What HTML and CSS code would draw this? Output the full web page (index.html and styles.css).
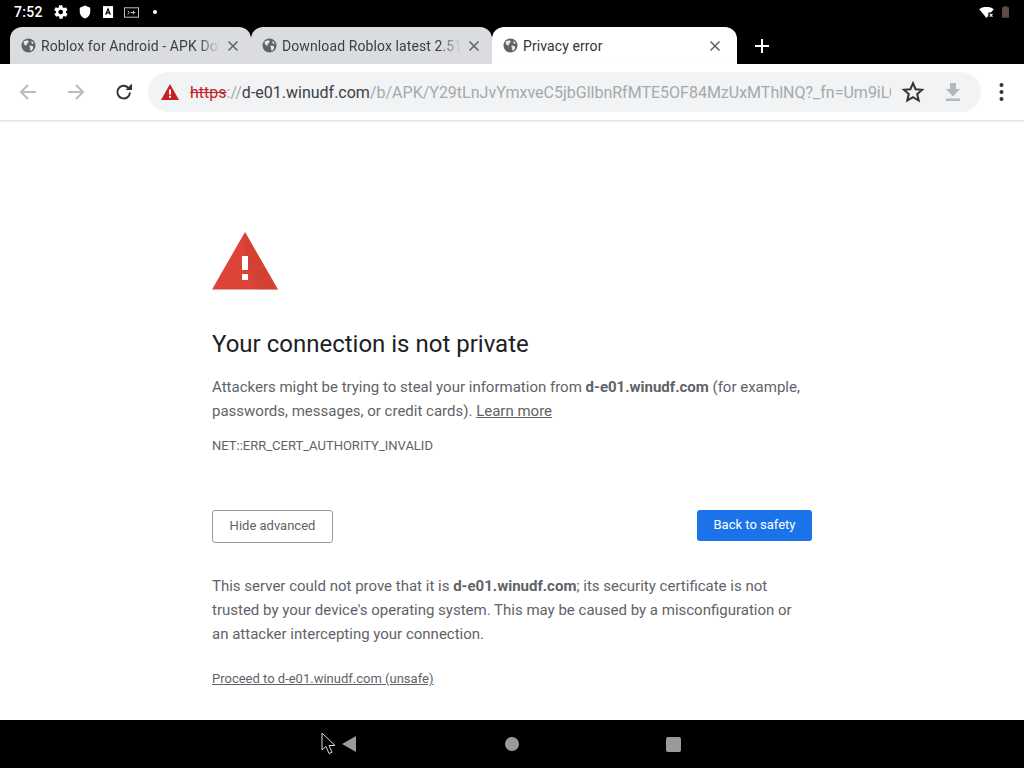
FILE: index.html
```html
<!DOCTYPE html>
<html lang="en">
<head>
<meta charset="utf-8">
<title>Privacy error</title>
<link rel="stylesheet" href="styles.css">
</head>
<body>
<div class="screen">
  <header class="status">
    <span class="time">7:52</span>
    <svg class="si gear" viewBox="0 0 24 24"><path fill="#fff" d="M19.4 13c.04-.32.1-.66.1-1s-.06-.68-.1-1l2.1-1.6c.2-.15.25-.42.12-.64l-2-3.46c-.12-.22-.39-.3-.61-.22l-2.49 1c-.52-.4-1.08-.73-1.69-.98L14 2.42A.5.5 0 0 0 13.5 2h-4a.5.5 0 0 0-.5.42l-.38 2.65c-.61.25-1.17.59-1.69.98l-2.49-1a.5.5 0 0 0-.61.22l-2 3.46c-.13.22-.07.49.12.64L4.6 11c-.04.32-.1.66-.1 1s.06.68.1 1l-2.1 1.65c-.19.15-.25.42-.12.64l2 3.46c.12.22.39.3.61.22l2.49-1c.52.4 1.08.73 1.69.98l.38 2.65c.05.24.26.4.5.4h4c.24 0 .45-.16.5-.4l.38-2.65c.61-.25 1.17-.59 1.69-.98l2.49 1c.22.08.49 0 .61-.22l2-3.46c.13-.22.07-.49-.12-.64zM11.5 15.5a3.5 3.5 0 1 1 0-7 3.5 3.5 0 0 1 0 7z"/></svg>
    <svg class="si shield" viewBox="0 0 24 24"><path fill="#fff" d="M12 1 3 4.500v6.500c0 5.500 3.800 10.700 9 12 5.200-1.300 9-6.500 9-12V4.500z"/></svg>
    <svg class="si adoc" viewBox="0 0 12 14"><rect width="11" height="13" fill="#fff"/><path fill="none" stroke="#000" stroke-width="1.300" d="M3 9.500 5.500 3l2.500 6.500M3.800 7.500h3.400"/></svg>
    <svg class="si term" viewBox="0 0 16 11"><rect x=".5" y=".5" width="15" height="10" fill="none" stroke="#ccc"/><path fill="none" stroke="#ccc" d="M4 3.500l1.500 2L4 7.500M7 5.500h5M10 3.500v4"/></svg>
    <span class="dot"></span>
    <span class="spacer"></span>
    <svg class="si wifi" viewBox="0 0 16 12"><path fill="#fff" d="M0 2.500C4-1 12-1 16 2.500L8 12z"/><path fill="#000" d="M10 6h6v6h-6z"/><path stroke="#fff" stroke-width="1.200" d="M11.500 7.500l3 3M14.500 7.500l-3 3"/></svg>
    <svg class="si batt" viewBox="0 0 8 13"><path fill="#5b4b48" d="M2 1V0h4v1h2v12H0V1z"/><path fill="#9a3b33" d="M3.300 3h1.400v5H3.300zM3.300 9h1.400v1.500H3.300z"/></svg>
  </header>

  <nav class="tabs">
    <div class="tab">
      <svg class="globe" viewBox="0 0 16 16"><use href="#globe"/></svg>
      <span class="tab-title">Roblox for Android - APK Downloads</span>
      <svg class="close" viewBox="0 0 12 12"><path d="M1.500 1.500l9 9M10.500 1.500l-9 9"/></svg>
    </div>
    <div class="tab">
      <svg class="globe" viewBox="0 0 16 16"><use href="#globe"/></svg>
      <span class="tab-title">Download Roblox latest 2.517</span>
      <svg class="close" viewBox="0 0 12 12"><path d="M1.500 1.500l9 9M10.500 1.500l-9 9"/></svg>
    </div>
    <div class="tab active">
      <svg class="globe" viewBox="0 0 16 16"><use href="#globe"/></svg>
      <span class="tab-title">Privacy error</span>
      <svg class="close" viewBox="0 0 12 12"><path d="M1.500 1.500l9 9M10.500 1.500l-9 9"/></svg>
    </div>
    <svg class="newtab" viewBox="0 0 14 14"><path d="M7 0v14M0 7h14"/></svg>
  </nav>

  <div class="toolbar">
    <svg class="tb back" viewBox="0 0 18 18"><path d="M17 9H2M9 2 2 9l7 7"/></svg>
    <svg class="tb fwd" viewBox="0 0 18 18"><path d="M1 9h15M9 2l7 7-7 7"/></svg>
    <svg class="reload" viewBox="0 0 18 18"><path fill="none" stroke="#333" stroke-width="2" d="M15 9.500A6.300 6.300 0 1 1 13.200 4.700"/><path fill="#333" d="M10.500 7H17V.6z"/></svg>
    <div class="omnibox">
      <svg class="warn" viewBox="0 0 18 16"><path fill="#c5221f" d="M9 0l9 16H0z"/><path fill="#fff" d="M8 5.500h2v5H8zM8 11.700h2v2H8z"/></svg>
      <div class="url"><span class="https">https</span><span class="dim">://</span><span class="host">d-e01.winudf.com</span><span class="dim">/b/APK/Y29tLnJvYmxveC5jbGllbnRfMTE5OF84MzUxMThlNQ?_fn=Um9iLG94</span></div>
      <svg class="star" viewBox="0 0 24 24"><path fill="none" stroke="#333" stroke-width="2" stroke-linejoin="miter" d="M12 3.200l2.600 6 6.500.6-4.900 4.300 1.500 6.400-5.700-3.400-5.700 3.400 1.500-6.400-4.900-4.300 6.500-.6z"/></svg>
      <svg class="dl" viewBox="0 0 16 18"><path fill="#b4b8bb" d="M5 0h6v6h4l-7 7.500L1 6h4zM1 15.500h14V18H1z"/></svg>
    </div>
    <svg class="menu" viewBox="0 0 4 18"><circle cx="2" cy="2" r="2"/><circle cx="2" cy="9" r="2"/><circle cx="2" cy="16" r="2"/></svg>
  </div>

  <main class="page">
    <div class="interstitial">
      <svg class="alert" viewBox="0 0 66 58"><path fill="#db4437" d="M33 0l33 57.500H0z"/><path fill="#c53929" d="M33 0l33 57.500H46L33 30z" opacity=".3"/><path fill="#fff" d="M30 24h6v14h-6zM30 42h6v6h-6z"/></svg>
      <h1>Your connection is not private</h1>
      <p class="lead">Attackers might be trying to steal your information from <b>d-e01.winudf.com</b> (for example, passwords, messages, or credit cards). <a href="#">Learn more</a></p>
      <p class="code">NET::ERR_CERT_AUTHORITY_INVALID</p>
      <div class="actions">
        <button class="btn-outline">Hide advanced</button>
        <button class="btn-primary">Back to safety</button>
      </div>
      <p class="detail">This server could not prove that it is <b>d-e01.winudf.com</b>; its security certificate is not trusted by your device's operating system. This may be caused by a misconfiguration or an attacker intercepting your connection.</p>
      <a class="proceed" href="#">Proceed to d-e01.winudf.com (unsafe)</a>
    </div>
  </main>

  <footer class="navbar">
    <span class="nav-group">
      <svg class="cursor" viewBox="0 0 16 24"><path fill="#000" stroke="#ddd" stroke-width="1" d="M1 1v17l4-3.500 3 7 3-1.300-3-6.700h6z"/></svg>
      <svg class="nav-back" viewBox="0 0 14 16"><path fill="#9a9a9a" d="M14 0v16L0 8z"/></svg>
    </span>
    <span class="nav-home"></span>
    <span class="nav-recent"></span>
  </footer>
</div>
<svg class="defs" aria-hidden="true"><defs><symbol id="globe" viewBox="0 0 16 16"><circle cx="8" cy="8" r="7.500" fill="currentColor"/><path fill="#e4e6e8" d="M3 3.500 7 2.500l1.500 1.500L6.500 6l-1 2.500L3 6.500zM9 8l3.500.5.500 2.500-2.500 3L9.500 11zM11 3l2 1.500.5 1.500H11.500z"/></symbol></defs></svg>
</body>
</html>
```
FILE: styles.css
```css
* { box-sizing: border-box; }
html, body { margin: 0; padding: 0; }
body { font-family: Roboto, "Liberation Sans", sans-serif; background: #000; }
.defs { width: 0; height: 0; display: block; }
.screen { width: 1024px; height: 768px; display: flex; flex-direction: column; overflow: hidden; background: #fff; }

.status { height: 27px; background: #000; color: #fff; display: flex; align-items: center; padding: 0 14px 3px; flex: none; }
.time { font-size: 14px; font-weight: 500; letter-spacing: .3px; width: 28px; margin-right: 11px; }
.si { display: block; flex: none; }
.gear { width: 16px; height: 16px; margin-right: 9px; }
.shield { width: 14px; height: 14px; margin-right: 11px; }
.adoc { width: 11px; height: 13px; margin-right: 10px; }
.term { width: 15px; height: 11px; margin-right: 14px; }
.dot { width: 4px; height: 4px; border-radius: 50%; background: #fff; }
.spacer { flex: 1; }
.wifi { width: 15px; height: 11px; margin-right: 8px; }
.batt { width: 7px; height: 12px; margin-right: 1px; }

.tabs { height: 37px; background: #000; display: flex; align-items: stretch; padding-left: 10px; flex: none; }
.tab { width: 241px; background: #dadce0; border-radius: 12px 12px 0 0; display: flex; align-items: center; padding: 0 12px 0 11px; color: #3c4043; font-size: 14px; }
.tab.active { width: 245px; background: #fff; color: #333; padding-right: 16px; }
.globe { width: 15px; height: 15px; flex: none; margin-right: 5px; color: #5f6368; }
.tab-title { flex: 1; white-space: nowrap; overflow: hidden; letter-spacing: .1px; -webkit-mask-image: linear-gradient(90deg, #000 88%, transparent 100%); mask-image: linear-gradient(90deg, #000 88%, transparent 100%); padding-right: 6px; margin-right: 7px; }
.active .tab-title { mask-image: none; -webkit-mask-image: none; }
.close { width: 12px; height: 12px; flex: none; fill: none; stroke: #5f6368; stroke-width: 1.500; }
.newtab { width: 14px; height: 14px; align-self: center; margin-left: 18px; fill: none; stroke: #fff; stroke-width: 2; }

.toolbar { height: 57px; background: #fff; display: flex; align-items: center; padding: 0 0 0 19px; flex: none; border-bottom: 1px solid #e4e4e4; box-shadow: 0 1px 2px rgba(0,0,0,.08); position: relative; }
.tb { width: 18px; height: 18px; fill: none; stroke: #b9bcbf; stroke-width: 2; flex: none; }
.fwd { margin-left: 30px; }
.reload { width: 18px; height: 18px; margin-left: 30px; flex: none; }
.omnibox { width: 833px; height: 40px; margin-left: 15px; background: #f1f3f4; border-radius: 20px; display: flex; align-items: center; padding: 0 18px 0 13px; flex: none; }
.warn { width: 18px; height: 16px; flex: none; margin-right: 11px; }
.url { width: 701px; overflow: hidden; white-space: nowrap; font-size: 16px; color: #9aa0a6; flex: none; }
.https { color: #c5221f; text-decoration: line-through; }
.host { color: #3c4043; }
.dim { color: #a4a9ae; }
.star { width: 24px; height: 24px; margin-left: 10px; flex: none; }
.dl { width: 16px; height: 18px; margin-left: 20px; flex: none; }
.menu { width: 5px; height: 18px; margin-left: 18px; fill: #333; flex: none; }

.page { flex: 1; min-height: 0; background: #fff; padding-top: 111px; }
.interstitial { width: 600px; margin: 0 auto; color: #5f6368; font-size: 15px; line-height: 24px; }
.alert { width: 66px; height: 58px; display: block; }
h1 { margin: 38px 0 0; font-size: 24px; font-weight: 400; line-height: 32px; color: #202124; }
.lead { margin: 15px 0 0; }
.lead b, .detail b { font-weight: 700; }
a { color: #5f6368; text-decoration: underline; }
.code { margin: 11px 0 0; font-size: 13px; line-height: 24px; }
.actions { display: flex; justify-content: space-between; align-items: flex-start; margin-top: 52px; }
button { font-family: inherit; font-size: 13px; border-radius: 3px; cursor: pointer; }
.btn-outline { width: 121px; height: 33px; background: #fff; border: 1px solid #9a9da0; color: #5f6368; padding: 0 0 2px; }
.btn-primary { width: 115px; height: 31px; background: #1a73e8; border: 0; color: #fff; padding: 0 0 2px; }
.detail { margin: 31px 0 0; max-width: 590px; }
.proceed { display: block; margin-top: 21px; font-size: 13px; line-height: 24px; }

.navbar { height: 48px; background: #000; display: flex; align-items: center; flex: none; padding-left: 321px; }
.nav-group { display: flex; align-items: center; width: 184px; }
.cursor { width: 16px; height: 24px; margin-right: 5px; }
.nav-back { width: 14px; height: 16px; }
.nav-home { width: 14px; height: 14px; border-radius: 50%; background: #9a9a9a; margin-right: 147px; }
.nav-recent { width: 15px; height: 15px; border-radius: 2px; background: #9a9a9a; }
```
